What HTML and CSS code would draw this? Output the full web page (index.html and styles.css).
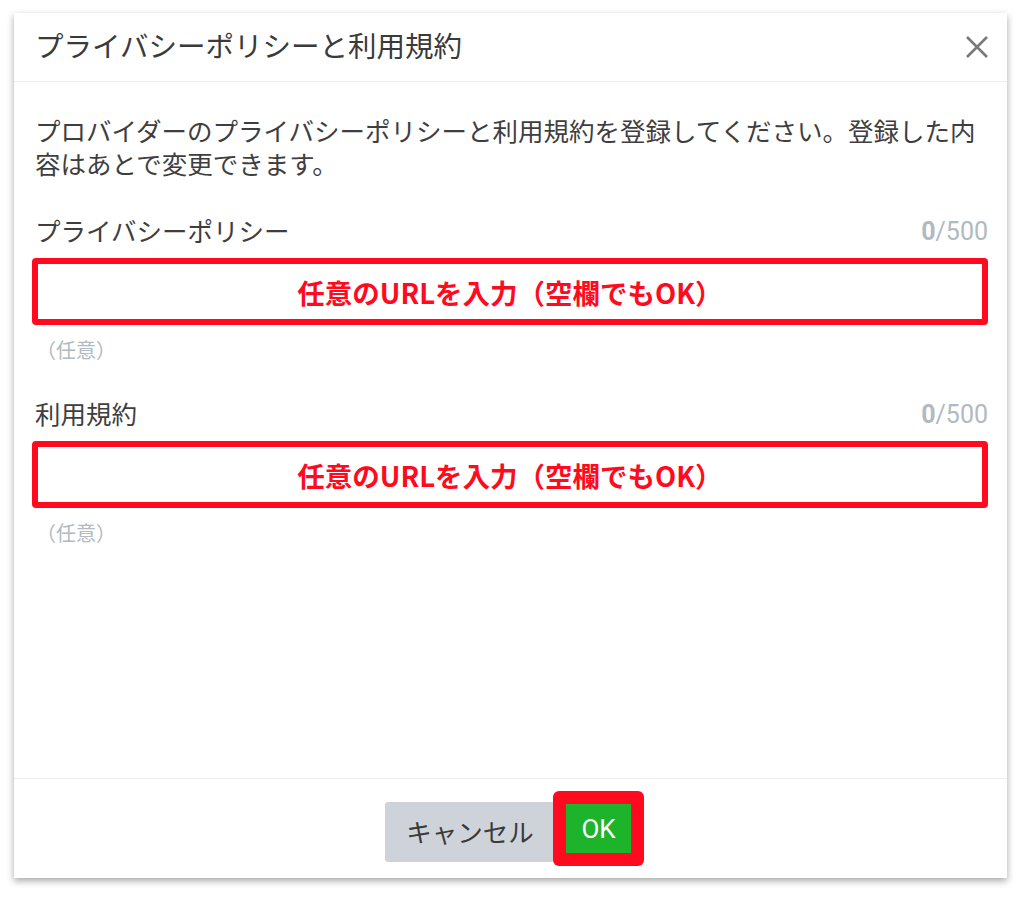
FILE: index.html
```html
<!DOCTYPE html>
<html lang="ja">
<head>
    <meta charset="UTF-8">
    <meta name="viewport" content="width=device-width, initial-scale=1.0">
    <title>プライバシーポリシーと利用規約</title>
    <link rel="stylesheet" href="styles.css">
</head>
<body>

<div class="dialog">
    <div class="dialog-header">
        <h1>プライバシーポリシーと利用規約</h1>
        <button class="close" type="button" aria-label="閉じる">
            <svg width="24" height="24" viewBox="0 0 24 24">
                <path d="M2 2 L22 22 M22 2 L2 22" stroke="#7a7a7a" stroke-width="2.6" fill="none"/>
            </svg>
        </button>
    </div>

    <div class="dialog-body">
        <p class="intro">プロバイダーのプライバシーポリシーと利用規約を登録してください。登録した内容はあとで変更できます。</p>

        <div class="field">
            <div class="field-head">
                <label for="privacyUrl">プライバシーポリシー</label>
                <span class="counter"><b>0</b>/500</span>
            </div>
            <div class="url-box" id="privacyUrl">任意のURLを入力（空欄でもOK）</div>
            <div class="hint">（任意）</div>
        </div>

        <div class="field">
            <div class="field-head">
                <label for="termsUrl">利用規約</label>
                <span class="counter"><b>0</b>/500</span>
            </div>
            <div class="url-box" id="termsUrl">任意のURLを入力（空欄でもOK）</div>
            <div class="hint">（任意）</div>
        </div>
    </div>

    <div class="dialog-footer">
        <button class="btn-cancel" type="button">キャンセル</button>
        <span class="mark">
            <button class="btn-ok" type="button">OK</button>
        </span>
    </div>
</div>

</body>
</html>
```

FILE: styles.css
```css
body {
    margin: 0;
    padding: 13px 17px 19px 14px;
    background-color: #fff;
    font-family: "Noto Sans CJK JP", "Noto Sans", sans-serif;
    color: #3b3b3b;
}
.dialog {
    height: 865px;
    background-color: #fff;
    box-shadow: 0 3px 7px rgba(0, 0, 0, 0.35);
    display: flex;
    flex-direction: column;
}
.dialog-header {
    height: 68px;
    border-bottom: 1px solid #eceeef;
    display: flex;
    align-items: center;
    justify-content: space-between;
    padding: 0 18px 0 21px;
}
h1 {
    margin: 0;
    font-size: 28.5px;
    font-weight: normal;
    color: #3a3a3a;
    line-height: 1;
    padding-bottom: 4px;
}
.close {
    border: none;
    background: none;
    padding: 0;
    width: 24px;
    height: 24px;
    cursor: pointer;
}
.dialog-body {
    flex: 1;
    padding: 31px 19px 0 21px;
}
.intro {
    margin: 0;
    font-size: 25.5px;
    line-height: 33px;
    color: #3e3e3e;
}
.field {
    margin-top: 34px;
}
.field + .field {
    margin-top: 33px;
}
.field-head {
    display: flex;
    justify-content: space-between;
    align-items: center;
    height: 33px;
}
label {
    font-size: 25.5px;
    color: #3e3e3e;
}
.counter {
    font-family: Roboto, "Noto Sans", sans-serif;
    font-size: 25px;
    color: #b1b9c1;
    padding-top: 3px;
}
.counter b {
    font-weight: bold;
}
.url-box {
    margin: 12px 0 0 -3px;
    height: 55px;
    border: 6px solid #ff0a1e;
    border-radius: 4px;
    display: flex;
    align-items: center;
    justify-content: center;
    font-size: 27.5px;
    font-weight: bold;
    color: #ff0a1e;
}
.hint {
    margin-top: 12px;
    margin-left: 1px;
    font-size: 20px;
    line-height: 26px;
    color: #b1b9c1;
}
.dialog-footer {
    height: 99px;
    border-top: 1px solid #eeeff0;
    display: flex;
    align-items: center;
    justify-content: center;
    padding-left: 8px;
}
.btn-cancel {
    width: 170px;
    height: 60px;
    border: none;
    border-radius: 3px;
    background-color: #ced3da;
    color: #3a3a3a;
    font-family: "Noto Sans CJK JP", sans-serif;
    font-size: 25.5px;
    cursor: pointer;
    margin-top: 6px;
    padding-bottom: 4px;
}
.mark {
    margin-left: -2px;
    padding: 13px;
    background-color: #ff0a1e;
    border-radius: 6px;
    display: flex;
}
.btn-ok {
    width: 65px;
    height: 49px;
    border: none;
    background-color: #1db42b;
    color: #fff;
    font-family: Roboto, "Noto Sans", sans-serif;
    font-size: 26px;
    cursor: pointer;
    padding: 0;
}
```
